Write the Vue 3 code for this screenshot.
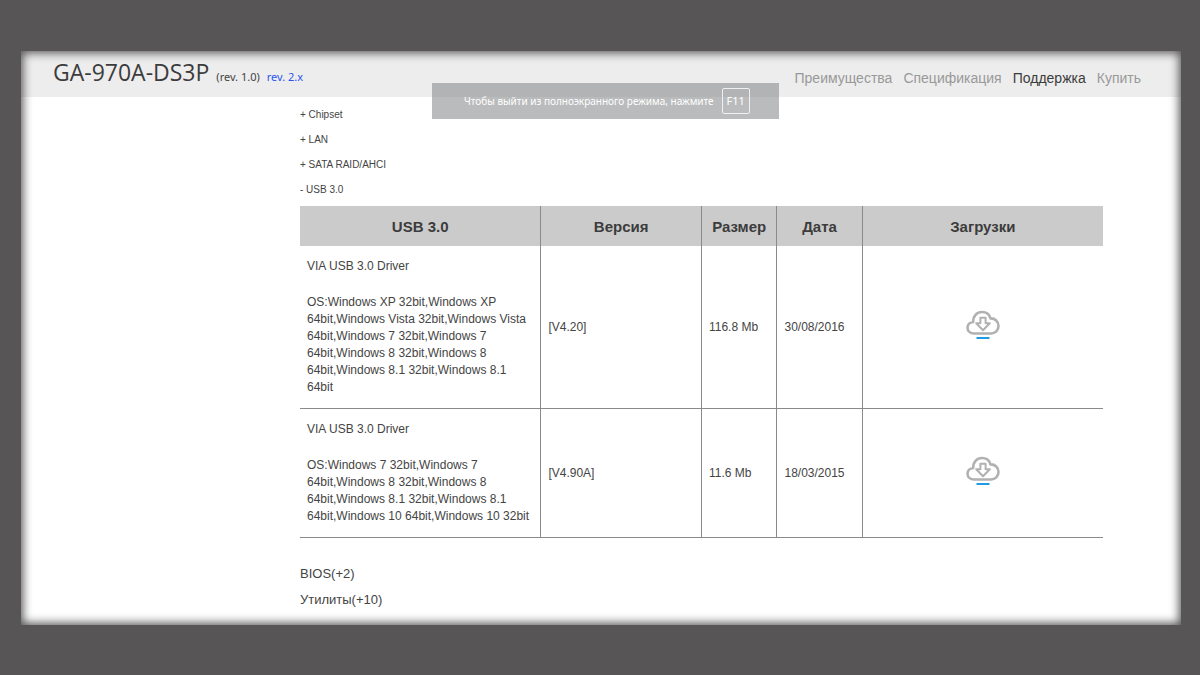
<script setup>
const nav = [
  { label: 'Преимущества' },
  { label: 'Спецификация' },
  { label: 'Поддержка', active: true },
  { label: 'Купить' },
]
const groups = ['+ Chipset', '+ LAN', '+ SATA RAID/AHCI', '- USB 3.0']
const columns = ['USB 3.0', 'Версия', 'Размер', 'Дата', 'Загрузки']
const drivers = [
  {
    name: 'VIA USB 3.0 Driver',
    os: 'OS:Windows XP 32bit,Windows XP 64bit,Windows Vista 32bit,Windows Vista 64bit,Windows 7 32bit,Windows 7 64bit,Windows 8 32bit,Windows 8 64bit,Windows 8.1 32bit,Windows 8.1 64bit',
    version: '[V4.20]',
    size: '116.8 Mb',
    date: '30/08/2016',
  },
  {
    name: 'VIA USB 3.0 Driver',
    os: 'OS:Windows 7 32bit,Windows 7 64bit,Windows 8 32bit,Windows 8 64bit,Windows 8.1 32bit,Windows 8.1 64bit,Windows 10 64bit,Windows 10 32bit',
    version: '[V4.90A]',
    size: '11.6 Mb',
    date: '18/03/2015',
  },
]
const sections = ['BIOS(+2)', 'Утилиты(+10)']
</script>

<template>
  <div class="page">
    <div class="panel">
      <header class="header">
        <div class="product">
          <h1 class="title">GA-970A-DS3P</h1>
          <span class="rev">(rev. 1.0)</span>
          <a class="rev rev-link" href="#">rev. 2.x</a>
        </div>
        <nav class="nav">
          <a v-for="item in nav" :key="item.label" href="#" :class="{ active: item.active }">{{ item.label }}</a>
        </nav>
      </header>

      <div class="toast" role="status">
        <span>Чтобы выйти из полноэкранного режима, нажмите</span>
        <kbd>F11</kbd>
      </div>

      <main class="content">
        <div class="groups">
          <button v-for="group in groups" :key="group" type="button">{{ group }}</button>
        </div>

        <table class="drivers">
          <colgroup>
            <col class="col-wide" />
            <col class="col-version" />
            <col class="col-size" />
            <col class="col-date" />
            <col class="col-wide" />
          </colgroup>
          <thead>
            <tr>
              <th v-for="column in columns" :key="column" scope="col">{{ column }}</th>
            </tr>
          </thead>
          <tbody>
            <tr v-for="driver in drivers" :key="driver.version">
              <td>
                <p class="name">{{ driver.name }}</p>
                <p>{{ driver.os }}</p>
              </td>
              <td>{{ driver.version }}</td>
              <td>{{ driver.size }}</td>
              <td>{{ driver.date }}</td>
              <td class="download">
                <a href="#" aria-label="Загрузки">
                  <svg width="34" height="30" viewBox="0 0 34 30" fill="none" aria-hidden="true">
                    <path d="M8 23.5C4.2 23.5 1.5 21 1.5 17.8C1.5 14.6 4 12.2 7.2 12C6.9 6.2 10.8 2 16 2C20.3 2 23.4 4.5 24.5 8.4C29.1 8.2 32.5 11.5 32.5 16C32.5 20.4 29.3 23.5 25 23.5Z" stroke="#b1b1b1" stroke-width="2.6" stroke-linejoin="round" />
                    <path d="M14.4 7.8H19.6V13.2H23.8L17 20.2L10.2 13.2H14.4Z" stroke="#b1b1b1" stroke-width="2" stroke-linejoin="round" />
                    <path d="M10.5 28H23.5" stroke="#239be0" stroke-width="2" />
                  </svg>
                </a>
              </td>
            </tr>
          </tbody>
        </table>

        <div class="sections">
          <button v-for="section in sections" :key="section" type="button">{{ section }}</button>
        </div>
      </main>
    </div>
  </div>
</template>

<style>
body {
  margin: 0;
  background: #575556;
}
</style>

<style scoped>
* {
  box-sizing: border-box;
}

.page {
  display: flex;
  min-height: 100vh;
  padding: 51px 19px 50px 21px;
  background: #575556;
  font-family: "Liberation Sans", Arial, sans-serif;
  color: #444;
}

.panel {
  position: relative;
  flex: 1;
  min-width: 0;
  background: #fff;
}

.panel::after {
  content: "";
  position: absolute;
  inset: 0;
  box-shadow: inset 0 0 10px 2px #575556;
  pointer-events: none;
}

.header {
  display: flex;
  justify-content: space-between;
  align-items: center;
  height: 46px;
  padding: 0 40px 0 32px;
  background: #ededed;
}

.product {
  display: flex;
  align-items: baseline;
  gap: 7px;
  padding-bottom: 4px;
}

.title {
  margin: 0;
  font: 400 23px/40px "Open Sans", sans-serif;
  color: #3c3c3c;
}

.rev {
  font: 11px/16px "Noto Sans", sans-serif;
  color: #444;
}

.rev-link {
  color: #2a55f5;
  text-decoration: none;
}

.nav {
  display: flex;
  gap: 11px;
  padding-top: 8px;
}

.nav a {
  font-size: 14px;
  line-height: 18px;
  color: #999;
  text-decoration: none;
}

.nav a.active {
  color: #3c3c3c;
}

.toast {
  position: absolute;
  top: 32px;
  left: 411px;
  display: flex;
  align-items: center;
  gap: 8px;
  height: 36px;
  padding: 0 29px 0 32px;
  background: rgba(132, 133, 136, 0.56);
  color: #fff;
  font: 10px/16px "Noto Sans", sans-serif;
  white-space: nowrap;
}

.toast kbd {
  padding: 4px;
  border: 1px solid #f0f0f0;
  border-radius: 2px;
  font-family: inherit;
  font-size: 11px;
}

.content {
  padding: 5px 78px 0 279px;
}

button {
  display: block;
  padding: 0;
  border: 0;
  background: none;
  color: inherit;
  font-family: inherit;
  text-align: left;
  cursor: pointer;
}

.groups {
  margin-bottom: 4px;
}

.groups button {
  font-size: 10px;
  line-height: 25px;
}

.drivers {
  width: 100%;
  table-layout: fixed;
  border-collapse: collapse;
  font-size: 12px;
  line-height: 17px;
}

.col-wide {
  width: 30%;
}

.col-version {
  width: 20%;
}

.col-size {
  width: 9.4%;
}

.col-date {
  width: 10.6%;
}

th {
  height: 40px;
  padding: 0;
  background: #cbcbcb;
  font-size: 15px;
  color: #3c3c3c;
}

td {
  padding: 12px 7px;
  border-bottom: 1px solid #8a8a8a;
}

th + th,
td + td {
  border-left: 1px solid #8a8a8a;
}

td p {
  margin: 0;
}

td .name {
  margin-bottom: 19px;
}

td.download {
  text-align: center;
}

.download svg {
  display: block;
  margin: 0 auto 4px;
}

.sections {
  margin-top: 23px;
}

.sections button {
  font-size: 13px;
  line-height: 26px;
}
</style>
